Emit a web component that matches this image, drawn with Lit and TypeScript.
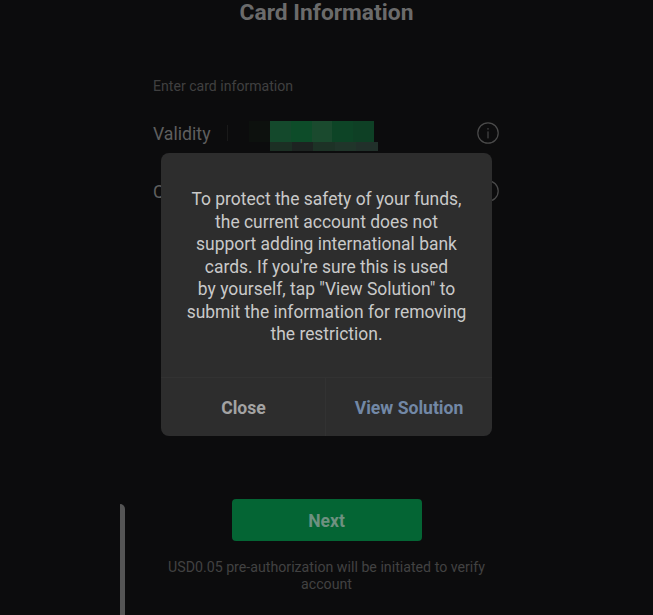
import { LitElement, html, css } from "lit";
import { customElement } from "lit/decorators.js";

const infoIcon = html`<svg class="info" width="24" height="24" viewBox="0 0 24 24" fill="none">
  <circle cx="12" cy="12" r="10.2" stroke="#4b4b4b" stroke-width="1.2"></circle>
  <rect x="11.4" y="10.4" width="1.2" height="7" fill="#464646"></rect>
  <rect x="11.4" y="7" width="1.2" height="1.7" fill="#464646"></rect>
</svg>`;

const topBlocks = ["#14492c", "#0d4c29", "#1a4a2e", "#0d4426", "#0e4025"];
const lowBlocks = ["#1c2f24", "#1d2321", "#1d3226", "#20352a", "#21302a"];

@customElement("app-root")
export class AppRoot extends LitElement {
  static styles = css`
    :host {
      display: block;
      position: relative;
      width: 653px;
      height: 615px;
      overflow: hidden;
      background: #0c0c0d;
      font-family: Roboto, "Liberation Sans", sans-serif;
    }
    .page {
      display: flex;
      flex-direction: column;
      height: 615px;
      box-sizing: border-box;
    }
    .title {
      margin: 1px 0 0;
      height: 24px;
      line-height: 24px;
      text-align: center;
      font-size: 22.8px;
      font-weight: 700;
      color: #6b6b6b;
    }
    .form {
      display: flex;
      flex-direction: column;
      margin: 49px 153.5px 0 153px;
    }
    .hint {
      font-size: 14.1px;
      line-height: 24px;
      color: #404040;
    }
    .row {
      display: flex;
      align-items: center;
      height: 58px;
      font-size: 17.7px;
      color: #5f5f5f;
    }
    .row.first {
      margin-top: 6px;
    }
    .label {
      width: 74px;
      flex: none;
      padding-top: 1px;
    }
    .sep {
      width: 1px;
      height: 16px;
      background: #1a1a1a;
      flex: none;
    }
    .info {
      margin-left: auto;
      flex: none;
    }
    .mosaic {
      margin-left: 21px;
      align-self: flex-start;
      margin-top: 17px;
      display: flex;
      flex-direction: column;
    }
    .mosaic-top,
    .mosaic-low {
      display: flex;
    }
    .mosaic-top {
      height: 21px;
      padding-left: 21px;
    }
    .mosaic-low {
      height: 9px;
      margin-left: 21px;
    }
    .block {
      width: 20.8px;
      flex: none;
    }
    .mosaic-low .block {
      width: 21.6px;
    }
    .lead-block {
      width: 21px;
      margin-left: -21px;
      background: #0d110e;
      flex: none;
    }
    .action {
      display: flex;
      flex-direction: column;
      align-items: center;
      margin-top: auto;
      padding: 0 160px 22px;
      width: 100%;
      box-sizing: border-box;
    }
    .next {
      width: 190px;
      height: 42px;
      padding: 2px 0 0;
      border: none;
      border-radius: 4px;
      background: #046534;
      color: #6e9180;
      font: 700 17.5px Roboto, "Liberation Sans", sans-serif;
      flex: none;
    }
    .note {
      margin-top: 18px;
      width: 340px;
      text-align: center;
      font-size: 14.2px;
      line-height: 17px;
      color: #424242;
      flex: none;
    }
    .scroll {
      position: absolute;
      left: 120px;
      top: 504px;
      width: 5px;
      height: 111px;
      background: #555;
      border-top-right-radius: 5px;
    }
    .dialog {
      position: absolute;
      left: 161px;
      top: 153px;
      width: 331px;
      height: 283px;
      display: flex;
      flex-direction: column;
      border-radius: 8px;
      background: #2d2d2d;
    }
    .msg {
      flex: 1;
      margin: 0;
      padding-top: 35px;
      box-sizing: border-box;
      text-align: center;
      font-size: 17.45px;
      line-height: 22.55px;
      color: #c9c9c9;
    }
    .buttons {
      display: grid;
      grid-template-columns: 165px 1fr;
      height: 58px;
      border-top: 1px solid #323232;
    }
    .btn {
      display: flex;
      align-items: center;
      justify-content: center;
      padding-top: 1px;
      font-size: 17.6px;
      font-weight: 700;
    }
    .close {
      color: #a3a3a3;
      border-right: 1px solid #323232;
      padding-left: 1px;
    }
    .view {
      color: #7288a6;
    }
  `;

  render() {
    return html`
      <div class="page">
        <h1 class="title">Card Information</h1>
        <div class="form">
          <div class="hint">Enter card information</div>
          <div class="row first">
            <span class="label">Validity</span>
            <span class="sep"></span>
            <div class="mosaic">
              <div class="mosaic-top">
                <span class="lead-block"></span>
                ${topBlocks.map((c) => html`<span class="block" style="background:${c}"></span>`)}
              </div>
              <div class="mosaic-low">
                ${lowBlocks.map((c) => html`<span class="block" style="background:${c}"></span>`)}
              </div>
            </div>
            ${infoIcon}
          </div>
          <div class="row">
            <span class="label">CVV</span>
            ${infoIcon}
          </div>
        </div>
        <div class="action">
          <button class="next">Next</button>
          <div class="note">USD0.05 pre-authorization will be initiated to verify account</div>
        </div>
      </div>
      <div class="scroll"></div>
      <div class="dialog">
        <p class="msg">
          To protect the safety of your funds,<br />
          the current account does not<br />
          support adding international bank<br />
          cards. If you're sure this is used<br />
          by yourself, tap "View Solution" to<br />
          submit the information for removing<br />
          the restriction.
        </p>
        <div class="buttons">
          <div class="btn close">Close</div>
          <div class="btn view">View Solution</div>
        </div>
      </div>
    `;
  }
}
